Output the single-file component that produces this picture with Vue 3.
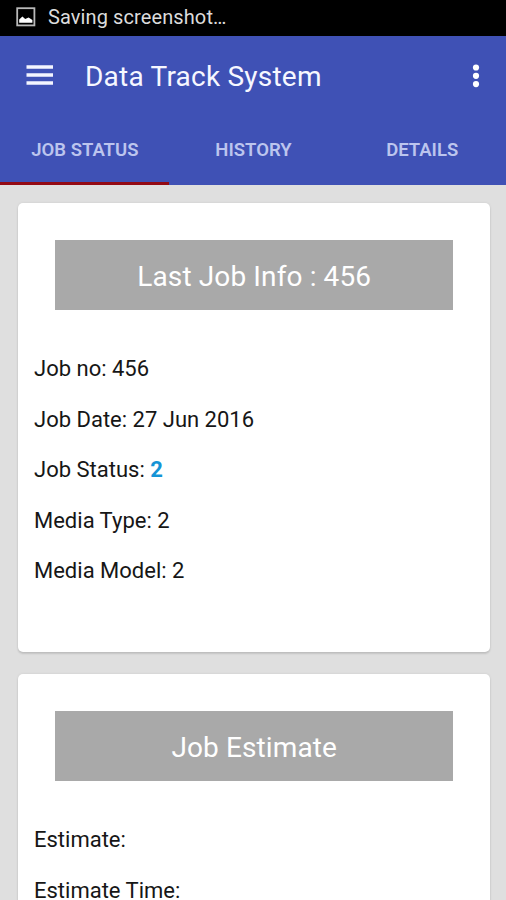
<template>
    <div class="screen">
        <div class="status-bar">
            <svg class="picture-icon" width="20" height="20" viewBox="0 0 20 20">
                <rect x="1.2" y="1.2" width="17.2" height="17.2" fill="none" stroke="#b9b9b9" stroke-width="1.8" />
                <path d="M3.2 15.8V12.4L6.4 9.6L9.2 12L12.6 10.6L16.4 13V15.8Z" fill="#fff" />
            </svg>
            <span class="status-text">Saving screenshot…</span>
        </div>
        <header class="app-bar">
            <div class="toolbar">
                <button class="icon-button menu">
                    <svg width="28" height="20" viewBox="0 0 28 20">
                        <path d="M0.5 2H27M0.5 10H27M0.5 18H27" stroke="#f4f5ff" stroke-width="3.4" />
                    </svg>
                </button>
                <h1>Data Track System</h1>
                <button class="icon-button more">
                    <svg width="8" height="24" viewBox="0 0 8 24">
                        <circle cx="4" cy="3.5" r="3.1" fill="#fff" />
                        <circle cx="4" cy="11.8" r="3.1" fill="#fff" />
                        <circle cx="4" cy="20.1" r="3.1" fill="#fff" />
                    </svg>
                </button>
            </div>
            <nav class="tabs">
                <button v-for="tab in tabs" :key="tab" class="tab" :class="{ active: tab === currentTab }"
                    @click="currentTab = tab"><span>{{ tab }}</span></button>
            </nav>
        </header>
        <main class="content">
            <section v-for="card in cards" :key="card.title" class="card">
                <h2><span>{{ card.title }}</span></h2>
                <p v-for="row in card.rows" :key="row.label">
                    {{ row.label }}: <b v-if="row.highlight">{{ row.value }}</b><template v-else>{{ row.value }}</template>
                </p>
            </section>
        </main>
    </div>
</template>

<script setup>
import { ref } from 'vue';

const tabs = ['JOB STATUS', 'HISTORY', 'DETAILS'];
const currentTab = ref('JOB STATUS');

const cards = [
    {
        title: 'Last Job Info : 456',
        rows: [
            { label: 'Job no', value: '456' },
            { label: 'Job Date', value: '27 Jun 2016' },
            { label: 'Job Status', value: '2', highlight: true },
            { label: 'Media Type', value: '2' },
            { label: 'Media Model', value: '2' },
        ],
    },
    {
        title: 'Job Estimate',
        rows: [
            { label: 'Estimate', value: '' },
            { label: 'Estimate Time', value: '' },
        ],
    },
];
</script>

<style>
body {
    margin: 0;
}
</style>

<style scoped>
.screen {
    display: flex;
    flex-direction: column;
    width: 100%;
    height: 900px;
    overflow: hidden;
    background: #dfdfdf;
    font-family: Roboto, "Liberation Sans", sans-serif;
}

.status-bar {
    display: flex;
    align-items: center;
    flex: none;
    box-sizing: border-box;
    height: 36px;
    padding: 0 16px 2px;
    background: #000;
    color: #dcdcdc;
}

.status-text {
    margin-left: 12px;
    font-size: 20px;
    letter-spacing: 0.1px;
    line-height: 30px;
}

.app-bar {
    flex: none;
    height: 148.5px;
    background: #3f51b5;
}

.toolbar {
    display: flex;
    align-items: center;
    height: 80px;
}

.toolbar h1 {
    flex: 1;
    margin: 1px 0 0 31px;
    color: #f6f7ff;
    font-size: 28px;
    font-weight: 400;
    letter-spacing: 0.22px;
}

.icon-button {
    display: flex;
    padding: 0;
    border: 0;
    background: none;
}

.menu {
    margin: -2px 0 0 26px;
}

.more {
    margin: -1px 26px 0 0;
}

.tabs {
    display: flex;
    height: 68.5px;
}

.tab {
    flex: 1;
    padding: 3px 0 0 1px;
    border: 0;
    border-bottom: 3.5px solid transparent;
    background: none;
    color: #bcc5ee;
    font-family: inherit;
    font-size: 18.5px;
    font-weight: 600;
}

.tab.active {
    border-bottom-color: #930a14;
}

.content {
    display: flex;
    flex-direction: column;
    gap: 22px;
    padding: 18.5px 16px 0 17.5px;
}

.card {
    flex: none;
    box-sizing: border-box;
    height: 449px;
    padding: 37px 16.5px 0;
    border-radius: 5px;
    background: #fff;
    box-shadow: 0 2px 2px rgba(0, 0, 0, 0.12), 0 0 3px rgba(0, 0, 0, 0.08);
}

.card h2 {
    display: flex;
    align-items: center;
    justify-content: center;
    height: 70px;
    margin: 0 21px 34px;
    padding: 3px 0 0 1px;
    box-sizing: border-box;
    background: #a9a9a9;
    color: #fff;
    font-size: 28px;
    font-weight: 400;
    letter-spacing: 0.12px;
}

.card p {
    margin: 0;
    color: #161616;
    font-size: 22px;
    line-height: 50.5px;
}

.card b {
    color: #1594d6;
}
</style>
